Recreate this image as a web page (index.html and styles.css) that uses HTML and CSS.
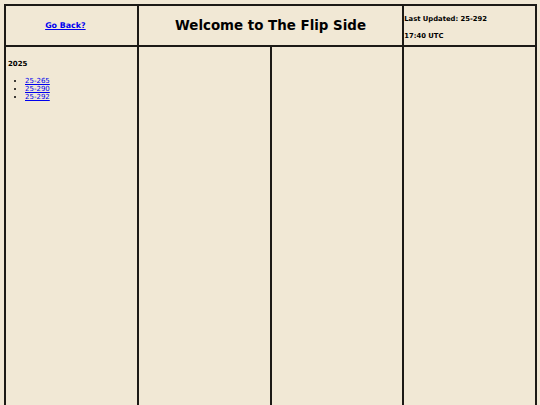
FILE: index.html
```html
<!DOCTYPE html>
<html lang="en">
<head>
<meta charset="UTF-8">
<meta name="viewport" content="width=device-width, initial-scale=1.0">
<title>The Flip Side</title>
<link rel="stylesheet" href="styles.css">
</head>
<body>

<!-- Page grid -->
<div class="page">
    <div class="cell head-left">
        <a href="#">Go Back?</a>
    </div>
    <div class="cell head-title">
        <h1>Welcome to The Flip Side</h1>
    </div>
    <div class="cell head-right">
        <p>Last Updated: 25-292</p>
        <p>17:40 UTC</p>
    </div>

    <!-- Archive column -->
    <div class="cell archive">
        <h4>2025</h4>
        <ul>
            <li><a href="#">25-265</a></li>
            <li><a href="#">25-290</a></li>
            <li><a href="#">25-292</a></li>
        </ul>
    </div>
    <div class="cell"></div>
    <div class="cell"></div>
    <div class="cell"></div>
</div>

</body>
</html>
```

FILE: styles.css
```css
* {
    box-sizing: border-box;
    margin: 0;
    padding: 0;
}

body {
    background-color: #f1e8d5;
    color: #000;
    font-family: "DejaVu Sans", Verdana, sans-serif;
    padding: 4px 4px 0 4px;
}

.page {
    display: grid;
    grid-template-columns: repeat(4, 1fr);
    grid-template-rows: 39px 600px;
    gap: 2px;
    padding: 2px;
    background-color: #1c1a16;
    width: 533px;
}

.cell {
    background-color: #f1e8d5;
}

.head-left {
    display: flex;
    align-items: center;
    justify-content: center;
    padding-right: 12px;
}

.head-left a {
    color: #0000ee;
    font-size: 7.9px;
    font-weight: bold;
}

.head-title {
    grid-column: span 2;
    display: flex;
    align-items: center;
    justify-content: center;
}

.head-title h1 {
    font-size: 13.4px;
    font-weight: bold;
}

.head-right {
    display: flex;
    flex-direction: column;
    justify-content: center;
    gap: 9px;
    font-size: 6.8px;
    font-weight: bold;
    padding-top: 3px;
}

.archive {
    padding: 13px 2px 0 2px;
}

.archive h4 {
    font-size: 7px;
    font-weight: bold;
    margin-bottom: 9px;
}

.archive ul {
    padding-left: 17px;
    font-size: 7px;
    line-height: 8px;
}

.archive a {
    color: #0000ee;
}
```
